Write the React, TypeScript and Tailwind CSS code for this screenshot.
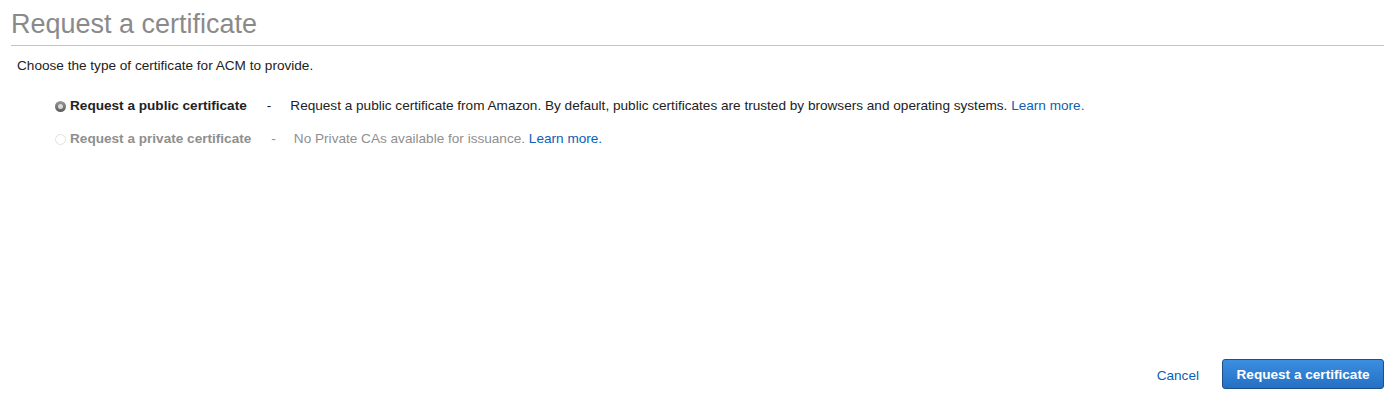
import React from "react";

function Radio({ disabled }: { checked?: boolean; disabled?: boolean }) {
  if (disabled) {
    return (
      <span className="inline-block w-[11px] h-[11px] rounded-full border border-[#e2e2e2] bg-white shrink-0" />
    );
  }
  return (
    <span className="inline-flex items-center justify-center w-[11px] h-[11px] rounded-full bg-gradient-to-b from-[#9a9a9a] to-[#5c5c5c] shrink-0">
      <span className="w-[5px] h-[5px] rounded-full bg-[#d9d9d9]" />
    </span>
  );
}

export default function App() {
  return (
    <div
      className="w-[1400px] h-[413px] bg-white relative text-[13.6px] text-[#222]"
      style={{ fontFamily: '"Liberation Sans", Arial, Helvetica, sans-serif' }}
    >
      <div className="pl-[11px] pr-[16px] pt-[9px]">
        <h1 className="text-[27px] leading-[30px] text-[#8a8a8a] font-normal pb-[6px] border-b border-[#c4c4c8]">
          Request a certificate
        </h1>
      </div>
      <p className="pl-[17px] mt-[12px] leading-[16px]">Choose the type of certificate for ACM to provide.</p>
      <div className="pl-[55px] mt-[24px] flex flex-col gap-[17px]">
        <div className="flex items-center h-[16px]">
          <Radio checked />
          <span className="ml-[4px] font-bold text-[#222]">Request a public certificate</span>
          <span className="ml-[20px]">-</span>
          <span className="ml-[19px]">
            Request a public certificate from Amazon. By default, public certificates are trusted by browsers and
            operating systems. <a className="text-[#0b5fb5]">Learn more.</a>
          </span>
        </div>
        <div className="flex items-center h-[16px] text-[#8f8f8f]">
          <Radio disabled />
          <span className="ml-[4px] font-bold">Request a private certificate</span>
          <span className="ml-[20px]">-</span>
          <span className="ml-[18px]">
            No Private CAs available for issuance. <a className="text-[#0b5fb5]">Learn more.</a>
          </span>
        </div>
      </div>
      <div className="absolute right-[16px] top-[359px] flex items-center">
        <a className="text-[#0b5fb5] mr-[23px] pt-[5px]">Cancel</a>
        <button className="w-[162px] h-[30px] pt-[3px] rounded-[3px] border border-[#1d4f88] bg-gradient-to-b from-[#3b8ee0] to-[#2470c4] text-white font-bold text-[13.6px]">
          Request a certificate
        </button>
      </div>
    </div>
  );
}
